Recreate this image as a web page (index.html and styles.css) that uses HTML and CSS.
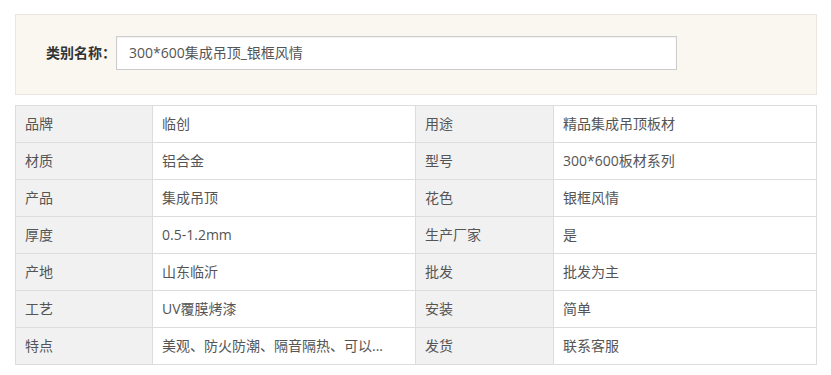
FILE: index.html
```html
<!DOCTYPE html>
<html lang="zh-CN">
<head>
<meta charset="utf-8">
<title>类别名称</title>
<link rel="stylesheet" href="styles.css">
</head>
<body>
<div class="page">
  <div class="name-box">
    <label class="name-label">类别名称：</label>
    <div class="name-input">300*600集成吊顶_银框风情</div>
  </div>
  <table class="attrs">
    <colgroup>
      <col class="c-key"><col class="c-val"><col class="c-key2"><col class="c-val">
    </colgroup>
    <tbody>
      <tr><td class="k">品牌</td><td>临创</td><td class="k">用途</td><td>精品集成吊顶板材</td></tr>
      <tr><td class="k">材质</td><td>铝合金</td><td class="k">型号</td><td>300*600板材系列</td></tr>
      <tr><td class="k">产品</td><td>集成吊顶</td><td class="k">花色</td><td>银框风情</td></tr>
      <tr><td class="k">厚度</td><td>0.5-1.2mm</td><td class="k">生产厂家</td><td>是</td></tr>
      <tr><td class="k">产地</td><td>山东临沂</td><td class="k">批发</td><td>批发为主</td></tr>
      <tr><td class="k">工艺</td><td>UV覆膜烤漆</td><td class="k">安装</td><td>简单</td></tr>
      <tr><td class="k">特点</td><td>美观、防火防潮、隔音隔热、可以...</td><td class="k">发货</td><td>联系客服</td></tr>
    </tbody>
  </table>
</div>
</body>
</html>
```
FILE: styles.css
```css
html, body {
  margin: 0;
  padding: 0;
  background: #ffffff;
}
body {
  font-family: "Open Sans", "Noto Sans CJK SC", sans-serif;
  font-size: 14px;
  color: #555555;
}
.page {
  padding: 14px 0 0 15px;
  width: 802px;
}
.name-box {
  display: flex;
  align-items: center;
  box-sizing: border-box;
  width: 802px;
  height: 81px;
  padding: 0 0 4px 0;
  background: #faf7f1;
  border: 1px solid #ebe6e1;
}
.name-label {
  width: 100px;
  text-align: right;
  font-weight: bold;
  color: #333333;
  line-height: 20px;
}
.name-input {
  box-sizing: border-box;
  width: 561px;
  height: 34px;
  padding: 0 12px;
  line-height: 32px;
  background: #ffffff;
  border: 1px solid #cccccc;
  box-shadow: inset 0 1px 2px rgba(0,0,0,0.06);
  color: #555555;
}
.attrs {
  margin-top: 10px;
  width: 802px;
  border-collapse: collapse;
  table-layout: fixed;
}
.c-key { width: 137px; }
.c-key2 { width: 138px; }
.attrs td {
  height: 36px;
  padding: 0 9px;
  border: 1px solid #dddddd;
  line-height: 20px;
  white-space: nowrap;
  overflow: hidden;
  color: #555555;
}
.attrs td.k {
  background: #f1f1f1;
}
```
